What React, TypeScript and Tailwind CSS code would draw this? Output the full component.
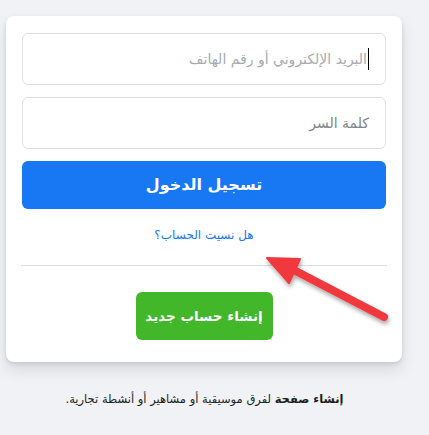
import React from 'react'

function Arrow(){
  return (
    <svg className="absolute left-0 top-0 pointer-events-none" width="429" height="435" viewBox="0 0 429 435">
      <defs>
        <filter id="sh" x="-20%" y="-20%" width="140%" height="140%">
          <feDropShadow dx="1" dy="3" stdDeviation="2" floodColor="#000" floodOpacity="0.35" />
        </filter>
      </defs>
      <g filter="url(#sh)" fill="#f0393c" stroke="#f0393c">
        <line x1="384" y1="317" x2="290" y2="268" strokeWidth="8" strokeLinecap="round" />
        <polygon points="267,258 300,259 289,283" strokeWidth="2" strokeLinejoin="round" />
      </g>
    </svg>
  )
}

export default function App(){
  return (
    <div dir="rtl" className="relative w-[429px] h-[435px] bg-[#f0f2f5] overflow-hidden" style={{ fontFamily: '"DejaVu Sans", Arial, sans-serif' }}>
      <div className="pt-[16px] pl-[6px] flex" dir="ltr">
        <div dir="rtl" className="w-[396px] bg-white rounded-[8px] shadow-[0_2px_4px_rgba(0,0,0,0.1),0_8px_16px_rgba(0,0,0,0.1)] p-[16px] pt-[17px] pb-[22px]">
          <div className="flex flex-col gap-[12px]">
            <div className="h-[52px] border border-[#dddfe2] rounded-[6px] flex items-center px-[16px]">
              <span className="w-[1px] h-[22px] bg-black ml-[1px]"></span>
              <span className="text-[14px] text-[#a8abaf] whitespace-nowrap">البريد الإلكتروني أو رقم الهاتف</span>
            </div>
            <div className="h-[52px] border border-[#dddfe2] rounded-[6px] flex items-center px-[16px]">
              <span className="text-[14px] text-[#80848a]">كلمة السر</span>
            </div>
            <button className="h-[48px] bg-[#1877f2] rounded-[6px] text-white text-[16px] font-bold whitespace-nowrap">تسجيل الدخول</button>
          </div>
          <div className="text-center mt-[16px] text-[12px] text-[#1877f2] leading-[20px]">هل نسيت الحساب؟</div>
          <div className="mt-[20px] border-t border-[#dadde1] -mx-[1px]"></div>
          <div className="flex justify-center mt-[26px]">
            <button className="h-[48px] w-[137px] bg-[#42b72a] rounded-[6px] text-white text-[13.5px] font-bold whitespace-nowrap">إنشاء حساب جديد</button>
          </div>
        </div>
      </div>
      <div className="text-center mt-[29px] text-[11.5px] text-[#1c1e21] pr-[20px] whitespace-nowrap">
        <span className="font-bold">إنشاء صفحة</span> لفرق موسيقية أو مشاهير أو أنشطة تجارية.
      </div>
      <Arrow />
    </div>
  )
}
